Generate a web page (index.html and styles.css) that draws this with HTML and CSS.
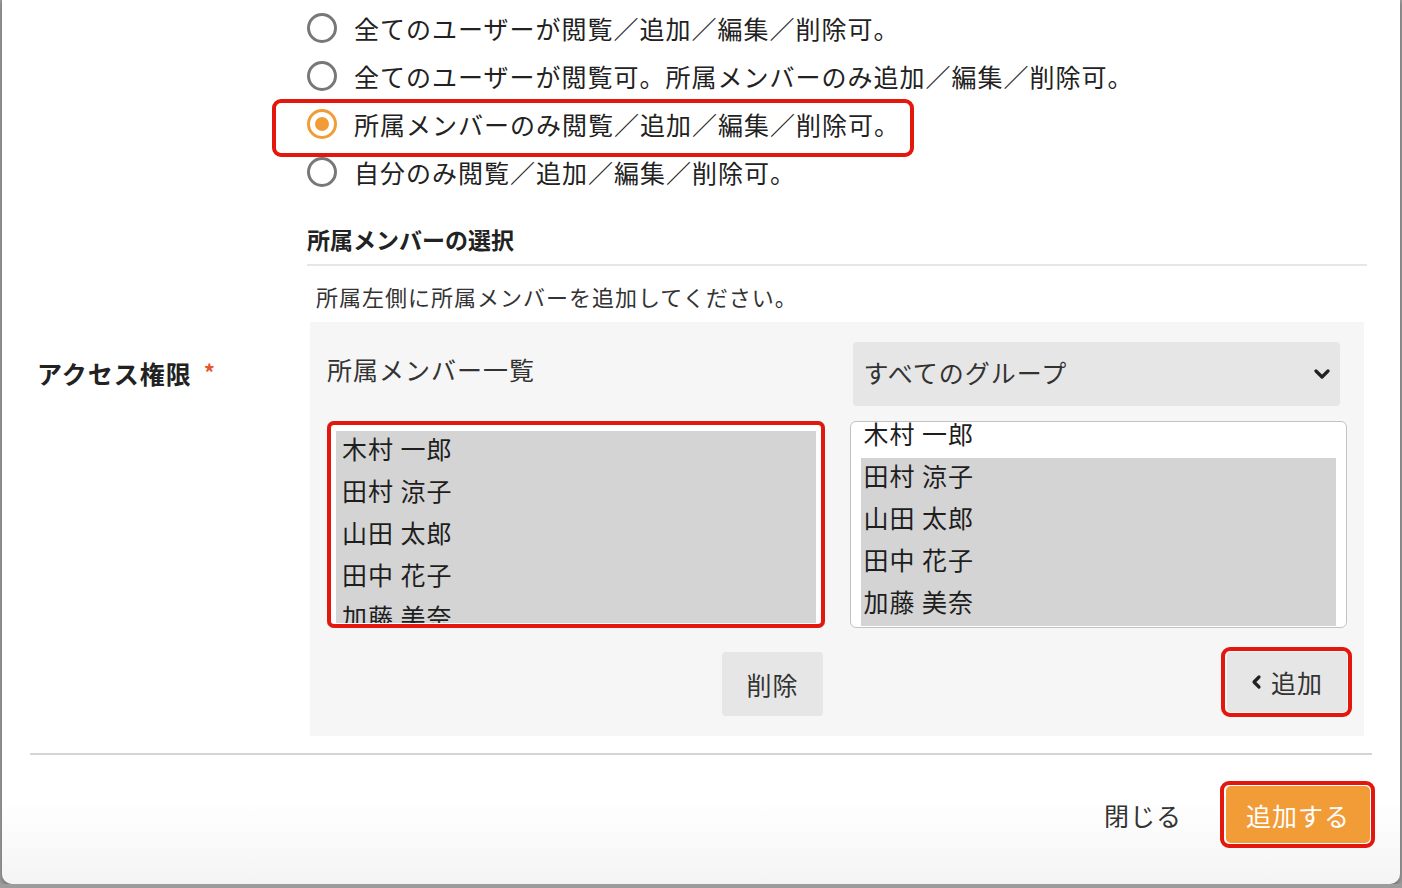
FILE: index.html
```html
<!DOCTYPE html>
<html>
<head>
    <title>アクセス権限</title>
    <link rel="stylesheet" href="styles.css">
</head>
<body>
    <div class="modal">
        <div class="field">
            <div class="field-label">
                アクセス権限<span class="required">*</span>
            </div>

            <div class="field-body">
                <div class="radios">
                    <label class="radio"><span class="dot"></span>全てのユーザーが閲覧／追加／編集／削除可。</label>
                    <label class="radio"><span class="dot"></span>全てのユーザーが閲覧可。所属メンバーのみ追加／編集／削除可。</label>
                    <label class="radio checked marked"><span class="dot"></span>所属メンバーのみ閲覧／追加／編集／削除可。</label>
                    <label class="radio"><span class="dot"></span>自分のみ閲覧／追加／編集／削除可。</label>
                </div>

                <h3 class="section-title">所属メンバーの選択</h3>
                <p class="hint">所属左側に所属メンバーを追加してください。</p>

                <div class="member-panel">
                    <div class="panel-col">
                        <div class="col-head">
                            <span class="col-title">所属メンバー一覧</span>
                        </div>
                        <div class="listbox marked">
                            <div class="list">
                                <div class="option selected">木村 一郎</div>
                                <div class="option selected">田村 涼子</div>
                                <div class="option selected">山田 太郎</div>
                                <div class="option selected">田中 花子</div>
                                <div class="option selected">加藤 美奈</div>
                            </div>
                        </div>
                        <div class="col-actions">
                            <button class="btn">削除</button>
                        </div>
                    </div>

                    <div class="panel-col">
                        <div class="col-head">
                            <div class="select">
                                <span>すべてのグループ</span>
                                <svg width="16" height="12" viewBox="0 0 16 12"><polyline points="2,3 8,9 14,3" fill="none" stroke="#222" stroke-width="3.2" stroke-linecap="round" stroke-linejoin="round"/></svg>
                            </div>
                        </div>
                        <div class="listbox">
                            <div class="list scrolled">
                                <div class="option">木村 一郎</div>
                                <div class="option selected">田村 涼子</div>
                                <div class="option selected">山田 太郎</div>
                                <div class="option selected">田中 花子</div>
                                <div class="option selected">加藤 美奈</div>
                            </div>
                        </div>
                        <div class="col-actions">
                            <button class="btn marked">
                                <svg width="12" height="16" viewBox="0 0 12 16"><polyline points="8,3 3,8 8,13" fill="none" stroke="#222" stroke-width="3.2" stroke-linecap="round" stroke-linejoin="round"/></svg>
                                追加
                            </button>
                        </div>
                    </div>
                </div>
            </div>
        </div>

        <hr class="divider">

        <div class="footer">
            <button class="btn-link">閉じる</button>
            <button class="btn-primary marked">追加する</button>
        </div>
    </div>
</body>
</html>
```

FILE: styles.css
```css
body {
    margin: 0;
    background-color: #9c9c9c;
    font-family: "Noto Sans CJK JP", "Noto Sans", sans-serif;
    color: #222;
    overflow: hidden;
}

.modal {
    margin-left: 2px;
    width: 1398px;
    height: 884px;
    box-sizing: border-box;
    background: linear-gradient(to bottom, #fff 0, #fff 800px, #f4f4f4 884px);
    border-radius: 0 0 10px 10px;
    box-shadow: 0 2px 4px rgba(0, 0, 0, 0.35);
}

.field {
    display: flex;
    align-items: center;
    padding-top: 4px;
}

.field-label {
    width: 305px;
    padding-left: 35px;
    box-sizing: border-box;
    font-size: 25px;
    font-weight: bold;
    letter-spacing: 1px;
    padding-top: 6px;
}

.required {
    color: #e8542c;
    font-size: 22px;
    margin-left: 12px;
    vertical-align: 3px;
}

.field-body {
    width: 1060px;
}

/* radio list */
.radios {
    display: flex;
    flex-direction: column;
    align-items: flex-start;
}

.radio {
    position: relative;
    display: flex;
    align-items: center;
    height: 48px;
    font-size: 25px;
    letter-spacing: 1px;
    white-space: nowrap;
}

.dot {
    width: 30px;
    height: 30px;
    box-sizing: border-box;
    border: 3.5px solid #787878;
    border-radius: 50%;
    margin-right: 17px;
    display: flex;
    align-items: center;
    justify-content: center;
}

.radio.checked .dot {
    border-color: #f29c38;
}

.radio.checked .dot::after {
    content: "";
    width: 14px;
    height: 14px;
    border-radius: 50%;
    background-color: #f29c38;
}

/* red annotation boxes */
.marked {
    position: relative;
}

.marked::before {
    content: "";
    position: absolute;
    top: -5px;
    bottom: -5px;
    left: -6px;
    right: -5px;
    border: 4px solid #e3170d;
    border-radius: 9px;
    pointer-events: none;
    z-index: 2;
}

.radio.marked::before {
    top: -1px;
    bottom: -9px;
    left: -35px;
    right: -14px;
}

.listbox.marked::before {
    top: -1px;
    bottom: -1px;
    left: -1px;
    right: -1px;
    border-radius: 7px;
}

.section-title {
    margin: 25px 0 0;
    padding-bottom: 7px;
    font-size: 23px;
    line-height: 36px;
    border-bottom: 2px solid #e6e6e6;
}

.hint {
    margin: 15px 0 0;
    padding-left: 9px;
    font-size: 22px;
    line-height: 30px;
    letter-spacing: 1px;
    color: #333;
}

/* member panel */
.member-panel {
    margin: 11px 0 0 3px;
    width: 1054px;
    box-sizing: border-box;
    padding: 20px 17px 20px 17px;
    background-color: #f6f6f6;
    display: flex;
    gap: 25px;
}

.panel-col {
    flex: 1;
    display: flex;
    flex-direction: column;
}

.col-head {
    height: 64px;
    display: flex;
    align-items: center;
    margin-bottom: 15px;
}

.col-title {
    padding-bottom: 10px;
    font-size: 25px;
    letter-spacing: 1px;
    color: #333;
}

.select {
    margin: 0 7px 0 3px;
    flex: 1;
    height: 64px;
    box-sizing: border-box;
    padding: 0 10px 0 11px;
    background-color: #e6e6e6;
    border-radius: 4px;
    display: flex;
    align-items: center;
    justify-content: space-between;
    font-size: 25px;
    letter-spacing: 1px;
    color: #333;
}

.select span {
    padding-bottom: 5px;
}

.listbox {
    height: 207px;
    box-sizing: border-box;
    border: 1px solid #c2c2c2;
    border-radius: 6px;
    background-color: #fff;
    padding: 9px 8px;
}

.listbox .list {
    height: 100%;
    overflow: hidden;
}

.listbox:not(.marked) {
    padding: 9px 10px;
    overflow: hidden;
}

.list.scrolled {
    height: auto;
    margin-top: -15px;
}

.listbox.marked .list {
    height: 192px;
}

.option {
    height: 42px;
    line-height: 34px;
    padding-left: 6px;
    font-size: 25px;
    letter-spacing: 1px;
    color: #1e1e1e;
    white-space: nowrap;
    box-sizing: border-box;
}

.scrolled .option {
    padding-left: 3px;
}

.option.selected {
    background-color: #d4d4d4;
}

.col-actions {
    display: flex;
    justify-content: flex-end;
    margin-top: 24px;
}

.btn {
    height: 64px;
    padding: 0 24px;
    border: none;
    border-radius: 4px;
    background-color: #e6e6e6;
    font-family: inherit;
    font-size: 25px;
    letter-spacing: 1px;
    color: #333;
    display: flex;
    align-items: center;
    gap: 8px;
}

.col-actions .btn {
    margin-right: 2px;
}

.col-actions .btn.marked {
    height: 60px;
    margin-right: 0;
}

.divider {
    margin: 17px 28px 0 28px;
    border: none;
    border-top: 2px solid #d4d4d4;
}

.footer {
    display: flex;
    justify-content: flex-end;
    align-items: center;
    padding: 31px 30px 0 0;
    gap: 44px;
}

.btn-link {
    border: none;
    background: none;
    font-family: inherit;
    font-size: 25px;
    letter-spacing: 1px;
    color: #333;
    padding: 0;
}

.btn-primary {
    height: 57px;
    padding: 0 20px;
    border: none;
    border-radius: 5px;
    background-color: #f29c38;
    color: #fff;
    font-family: inherit;
    font-size: 25px;
    letter-spacing: 1px;
}
```
